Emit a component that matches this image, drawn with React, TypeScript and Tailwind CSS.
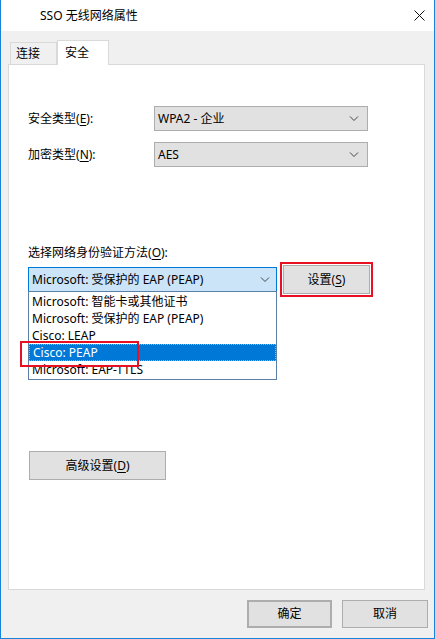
const font = 'font-["Noto_Sans","Noto_Sans_CJK_SC",sans-serif]';

function Key({ k }: { k: string }) {
  return (
    <>
      (<span className="underline underline-offset-2">{k}</span>)
    </>
  );
}

function Chevron() {
  return (
    <svg width="10" height="6" viewBox="0 0 10 6" className="shrink-0">
      <path d="M1 0.5 L5 4.5 L9 0.5" fill="none" stroke="#444" strokeWidth="1" />
    </svg>
  );
}

function Select({ value }: { value: string }) {
  return (
    <div className="flex h-[25px] w-[214px] items-center justify-between border border-[#adadad] bg-[#e1e1e1] pl-[3px] pr-[8px]">
      <span>{value}</span>
      <Chevron />
    </div>
  );
}

function Button({ children, className = '' }: { children: React.ReactNode; className?: string }) {
  return (
    <div
      className={`flex items-center justify-center border border-[#adadad] bg-[#e1e1e1] ${className}`}
    >
      {children}
    </div>
  );
}

const methods = [
  'Microsoft: 智能卡或其他证书',
  'Microsoft: 受保护的 EAP (PEAP)',
  'Cisco: LEAP',
  'Cisco: PEAP',
  'Microsoft: EAP-TTLS',
];

export default function App() {
  return (
    <div
      className={`flex h-[639px] w-[435px] flex-col border-x border-b border-[#1883d7] bg-[#f0f0f0] text-[12px] leading-[16px] text-black ${font}`}
    >
      {/* title bar */}
      <div className="flex h-[31px] shrink-0 items-center justify-between bg-white pl-[39px] pr-[9px]">
        <span>SSO 无线网络属性</span>
        <svg width="11" height="11" viewBox="0 0 11 11">
          <path d="M0.5 0.5 L10.5 10.5 M10.5 0.5 L0.5 10.5" stroke="#111" strokeWidth="1" />
        </svg>
      </div>

      <div className="flex flex-1 flex-col pl-[7px] pt-[9px]">
        {/* tabs */}
        <div className="flex h-[24px] items-end pl-[2px]">
          <div className="flex h-[22px] w-[47px] items-center border border-b-0 border-[#d9d9d9] bg-[#f0f0f0] pl-[5px]">
            连接
          </div>
          <div className="relative z-10 -mb-px flex h-[25px] w-[52px] items-center border border-b-0 border-[#d9d9d9] bg-white pl-[7px]">
            安全
          </div>
        </div>

        {/* tab panel */}
        <div className="relative flex h-[526px] w-[417px] flex-col border border-[#d9d9d9] bg-white pl-[19px]">
          <div className="mt-[41px] flex items-center">
            <span className="w-[126px]">
              安全类型<Key k="E" />:
            </span>
            <Select value="WPA2 - 企业" />
          </div>
          <div className="mt-[11px] flex items-center">
            <span className="w-[126px]">
              加密类型<Key k="N" />:
            </span>
            <Select value="AES" />
          </div>

          <div className="mt-[78px]">
            选择网络身份验证方法<Key k="O" />:
          </div>

          <div className="mt-[6px] flex items-start">
            <div className="relative">
              <div className="flex h-[25px] w-[249px] items-center justify-between border border-[#0078d7] bg-[#cce4f7] pl-[3px] pr-[6px]">
                <span>Microsoft: 受保护的 EAP (PEAP)</span>
                <Chevron />
              </div>
              {/* open dropdown list */}
              <div className="absolute left-0 top-[24px] z-10 flex w-[249px] flex-col border border-[#5a7fa8] bg-white pb-px pt-[1px]">
                {methods.map((m) => (
                  <div
                    key={m}
                    className={`flex h-[17px] items-center px-[3px] ${
                      m === 'Cisco: PEAP'
                        ? 'border border-dotted border-[#f5a623] bg-[#0078d7] px-[2px] text-white'
                        : ''
                    }`}
                  >
                    {m}
                  </div>
                ))}
              </div>
            </div>
            <div className="-mt-[5px] ml-[3px] border-2 border-[#e81123] p-px">
              <Button className="h-[29px] w-[87px]">
                设置<Key k="S" />
              </Button>
            </div>
          </div>

          {/* highlight around Cisco: PEAP */}
          <div className="absolute left-[11px] top-[276px] z-20 h-[26px] w-[119px] border-2 border-[#e81123]" />

          <Button className="ml-px mt-[154px] h-[29px] w-[137px]">
            高级设置<Key k="D" />
          </Button>
        </div>

        {/* footer buttons */}
        <div className="mt-[10px] flex justify-end gap-[10px] pr-[6px]">
          <Button className="h-[28px] w-[85px] border-2 border-[#0078d7]">确定</Button>
          <Button className="h-[28px] w-[86px]">取消</Button>
        </div>
      </div>
    </div>
  );
}
